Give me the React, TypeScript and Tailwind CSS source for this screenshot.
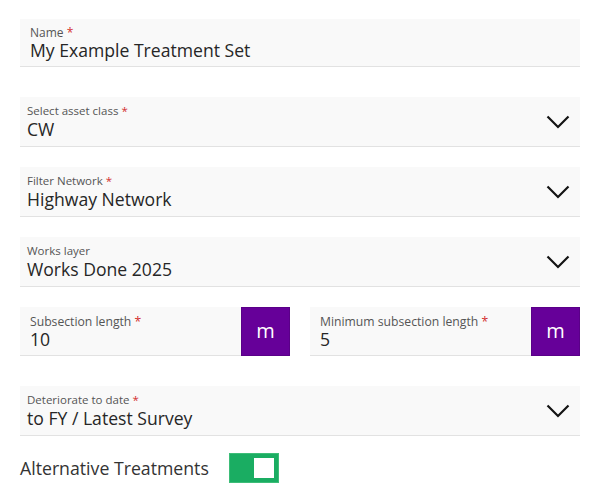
import React from "react";

const Req = () => <span className="text-[#d32f2f]"> *</span>;

const Chevron = () => (
  <svg width="24" height="14" viewBox="0 0 24 14" className="shrink-0">
    <polyline points="1.5,1.5 12,12 22.5,1.5" fill="none" stroke="#141414" strokeWidth="2.2" />
  </svg>
);

function SelectField({ label, value, required }: { label: string; value: string; required?: boolean }) {
  return (
    <div className="h-[50px] bg-[#f9f9f9] border-b border-[#e2e2e2] flex items-center pl-[7px] pr-[10px]">
      <div className="flex-1 pt-[6px] pb-[7px] self-start">
        <div className="text-[11.5px] leading-[16px] text-[#555]">
          {label}
          {required && <Req />}
        </div>
        <div className="text-[17.6px] leading-[20px] text-[#262626]">{value}</div>
      </div>
      <Chevron />
    </div>
  );
}

function UnitField({ label, value }: { label: string; value: string }) {
  return (
    <div className="flex-1 flex h-[49px]">
      <div className="flex-1 bg-[#f9f9f9] border-b border-[#e2e2e2] pl-[10px] pt-[8px]">
        <div className="text-[12.2px] leading-[14px] text-[#555]">
          {label}
          <Req />
        </div>
        <div className="text-[17.6px] leading-[20px] text-[#262626]">{value}</div>
      </div>
      <div className="w-[49px] bg-[#660099] border border-[#5a0088] flex items-center justify-center text-white text-[20px] leading-none pb-[2px]">
        m
      </div>
    </div>
  );
}

export default function App() {
  return (
    <div
      className="w-[600px] h-[494px] bg-white px-5 pt-[19px] flex flex-col"
      style={{ fontFamily: '"Open Sans", "Noto Sans", sans-serif' }}
    >
      <div className="h-[48px] bg-[#f9f9f9] border-b border-[#e2e2e2] pl-[10px] pt-[7px]">
        <div className="text-[12px] leading-[14px] text-[#555]">
          Name
          <Req />
        </div>
        <div className="text-[17.6px] leading-[20px] text-[#262626]">My Example Treatment Set</div>
      </div>

      <div className="mt-[30px]">
        <SelectField label="Select asset class" value="CW" required />
      </div>
      <div className="mt-[20px]">
        <SelectField label="Filter Network" value="Highway Network" required />
      </div>
      <div className="mt-[20px]">
        <SelectField label="Works layer" value="Works Done 2025" />
      </div>

      <div className="mt-[20px] flex gap-5">
        <UnitField label="Subsection length" value="10" />
        <UnitField label="Minimum subsection length" value="5" />
      </div>

      <div className="mt-[30px]">
        <SelectField label="Deteriorate to date" value="to FY / Latest Survey" required />
      </div>

      <div className="mt-[17px] flex items-center gap-5">
        <span className="text-[17.7px] leading-[24px] text-[#333]">Alternative Treatments</span>
        <div className="w-[50px] h-[30px] bg-[#1aad62] border border-[#3dbd78] flex items-center justify-end pr-[4px]">
          <div className="w-[20px] h-[20px] bg-white" />
        </div>
      </div>
    </div>
  );
}
